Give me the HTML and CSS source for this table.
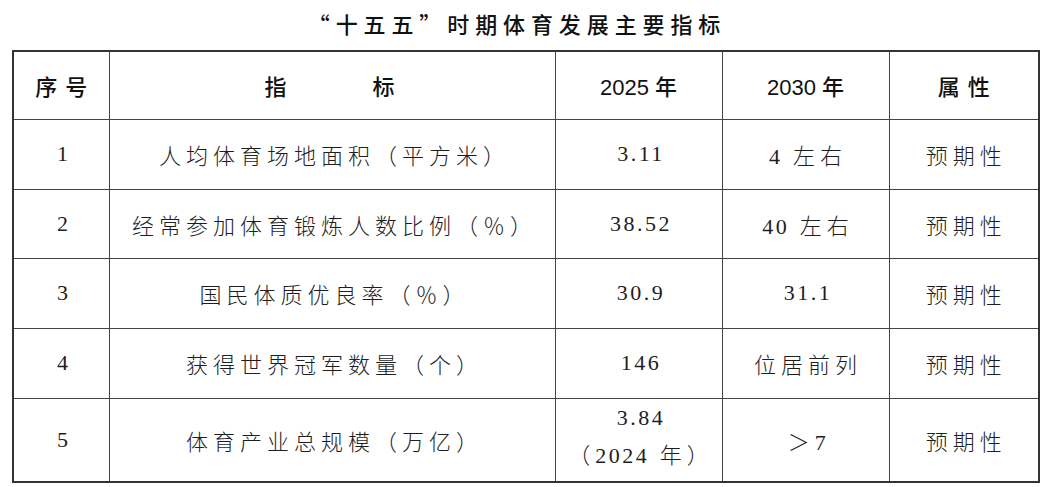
FILE: index.html
```html
<!DOCTYPE html>
<html lang="zh-CN">
<head>
<meta charset="utf-8">
<title>“十五五”时期体育发展主要指标</title>
<link rel="stylesheet" href="styles.css">
</head>
<body>
<div class="page">
  <h1 class="title">“十五五”时期体育发展主要指标</h1>
  <table class="grid">
    <colgroup>
      <col class="c-no">
      <col class="c-name">
      <col class="c-y1">
      <col class="c-y2">
      <col class="c-attr">
    </colgroup>
    <thead>
      <tr class="row-head">
        <th class="wide">序号</th>
        <th class="spread">指　　　标</th>
        <th>2025&nbsp;年</th>
        <th>2030&nbsp;年</th>
        <th class="wide">属性</th>
      </tr>
    </thead>
    <tbody>
      <tr class="row">
        <td><span class="num">1</span></td>
        <td>人均体育场地面积（平方米）</td>
        <td><span class="num">3.11</span></td>
        <td><span class="num">4</span> 左右</td>
        <td>预期性</td>
      </tr>
      <tr class="row row-b">
        <td><span class="num">2</span></td>
        <td>经常参加体育锻炼人数比例（％）</td>
        <td><span class="num">38.52</span></td>
        <td><span class="num">40</span> 左右</td>
        <td>预期性</td>
      </tr>
      <tr class="row">
        <td><span class="num">3</span></td>
        <td>国民体质优良率（％）</td>
        <td><span class="num">30.9</span></td>
        <td><span class="num">31.1</span></td>
        <td>预期性</td>
      </tr>
      <tr class="row">
        <td><span class="num">4</span></td>
        <td>获得世界冠军数量（个）</td>
        <td><span class="num">146</span></td>
        <td>位居前列</td>
        <td>预期性</td>
      </tr>
      <tr class="row row-last">
        <td><span class="num">5</span></td>
        <td>体育产业总规模（万亿）</td>
        <td class="two"><span class="num">3.84</span><br>（<span class="num">2024</span> 年）</td>
        <td>＞<span class="num">7</span></td>
        <td>预期性</td>
      </tr>
    </tbody>
  </table>
</div>
</body>
</html>
```

FILE: styles.css
```css
html, body {
  margin: 0;
  padding: 0;
  background: #ffffff;
}

.page {
  width: 1057px;
  padding: 0 0 0 12px;
  box-sizing: border-box;
}

.title {
  margin: 0 0 4px 0;
  height: 46px;
  line-height: 46px;
  text-align: center;
  font-family: "Noto Sans CJK SC", sans-serif;
  font-weight: 500;
  font-size: 22px;
  letter-spacing: 5.9px;
  color: #111;
  width: 1028px;
  box-sizing: border-box;
  padding-right: 18px;
}

.grid {
  border-collapse: collapse;
  table-layout: fixed;
  width: 1026px;
  border: 2px solid #333;
  color: #1e1e1e;
}

.c-no { width: 96px; }
.c-name { width: 446px; }
.c-y1 { width: 167px; }
.c-y2 { width: 167px; }
.c-attr { width: 150px; }

.grid th,
.grid td {
  border: 1px solid #444;
  text-align: center;
  vertical-align: middle;
  padding: 0;
}

.grid th {
  font-family: "Liberation Sans", "Noto Sans CJK SC", sans-serif;
  font-weight: 500;
  font-size: 22px;
  color: #111;
}

.grid th.wide {
  letter-spacing: 8px;
  padding-left: 8px;
}

.grid th.spread {
  font-family: "Noto Sans CJK SC", sans-serif;
  letter-spacing: 5px;
}

.row-head { height: 68px; }
.row { height: 70px; }
.row-b { height: 69px; }
.row-last { height: 82px; }

.grid td {
  font-family: "Liberation Serif", "Noto Sans CJK SC", serif;
  font-weight: 300;
  font-size: 22px;
  letter-spacing: 5px;
  padding-left: 5px;
}

.grid td .num {
  letter-spacing: 2.5px;
}

.grid td.two {
  line-height: 38px;
  padding-bottom: 6px;
}
```
